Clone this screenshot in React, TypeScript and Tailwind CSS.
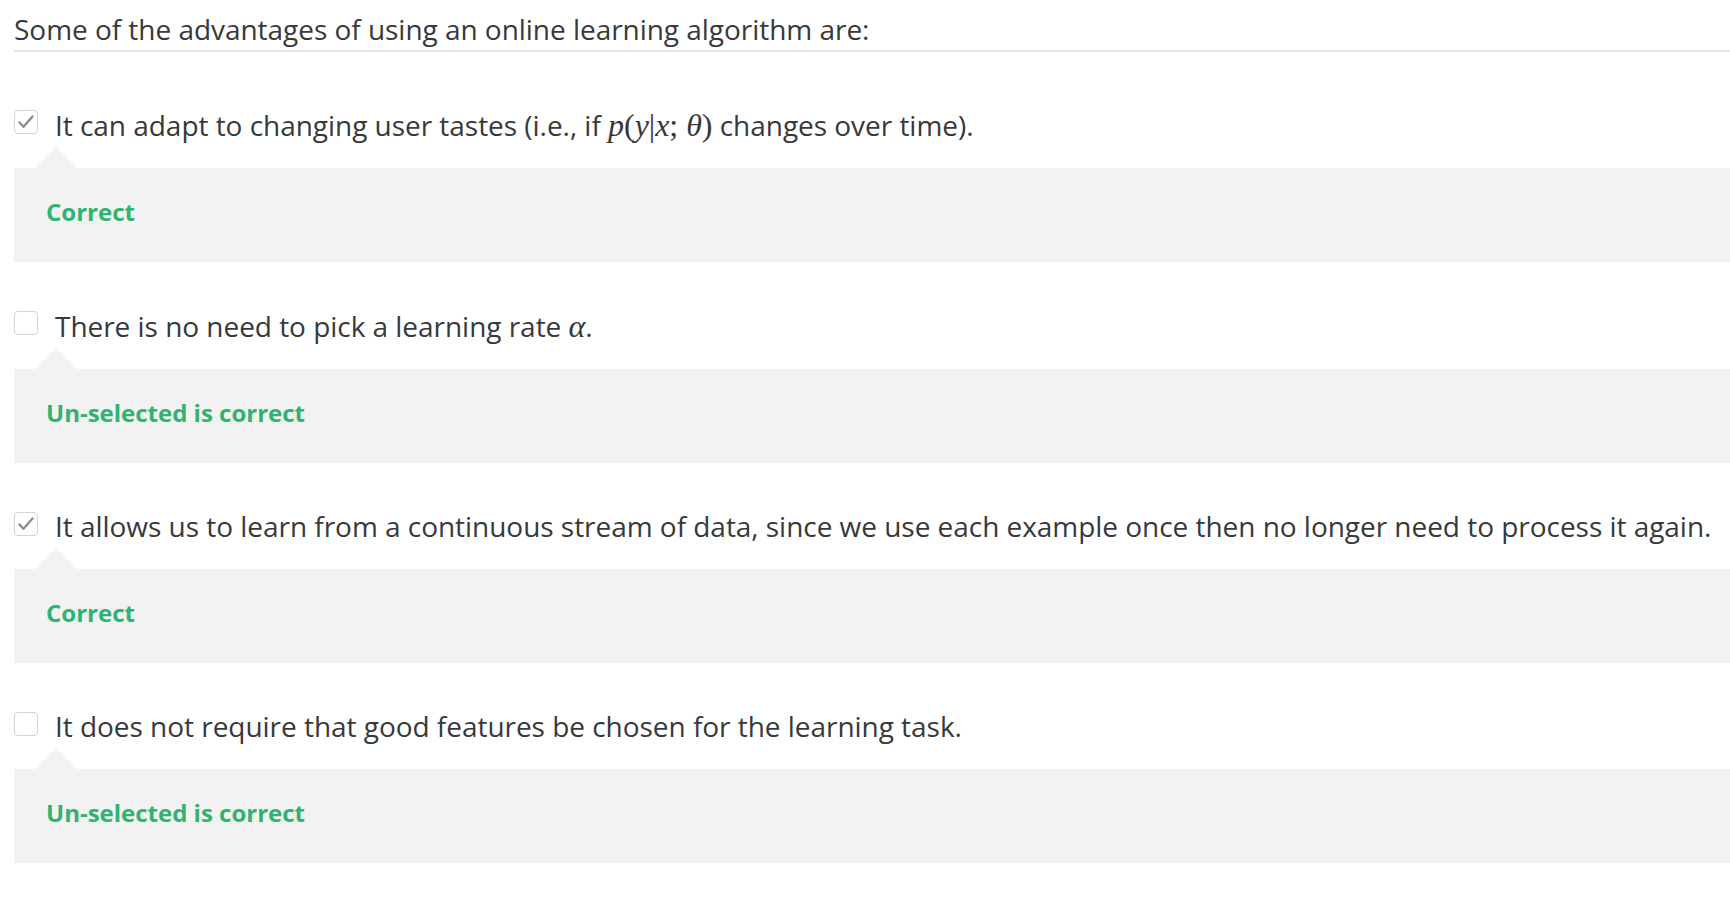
import React from 'react';

type Option = {
  id: number;
  checked: boolean;
  text: React.ReactNode;
  feedback: string;
};

const serif = { fontFamily: '"Liberation Serif", "DejaVu Serif", serif' };

const MathI = ({ children }: { children: React.ReactNode }) => (
  <span className="italic" style={serif}>{children}</span>
);

const MathR = ({ children }: { children: React.ReactNode }) => (
  <span style={serif}>{children}</span>
);

const options: Option[] = [
  {
    id: 1,
    checked: true,
    text: (
      <>
        It can adapt to changing user tastes (i.e., if{' '}
        <span className="text-[32px]">
          <MathI>p</MathI>
          <MathR>(</MathR>
          <MathI>y</MathI>
          <MathR>|</MathR>
          <MathI>x</MathI>
          <MathR>; </MathR>
          <MathI>θ</MathI>
          <MathR>)</MathR>
        </span>{' '}
        changes over time).
      </>
    ),
    feedback: 'Correct',
  },
  {
    id: 2,
    checked: false,
    text: (
      <>
        There is no need to pick a learning rate{' '}
        <span className="text-[32px]">
          <MathI>α</MathI>
        </span>
        .
      </>
    ),
    feedback: 'Un-selected is correct',
  },
  {
    id: 3,
    checked: true,
    text: 'It allows us to learn from a continuous stream of data, since we use each example once then no longer need to process it again.',
    feedback: 'Correct',
  },
  {
    id: 4,
    checked: false,
    text: 'It does not require that good features be chosen for the learning task.',
    feedback: 'Un-selected is correct',
  },
];

const CheckBox = ({ checked }: { checked: boolean }) => (
  <div className="mt-[6px] w-[24px] h-[24px] shrink-0 rounded-[4px] border border-[#d4d4d4] bg-white flex items-center justify-center">
    {checked && (
      <svg width="16" height="14" viewBox="0 0 16 14" fill="none">
        <path d="M1.5 7.5 L5.5 11.8 L14.5 1.5" stroke="#8c8c8c" strokeWidth="2.4" strokeLinecap="round" strokeLinejoin="round" />
      </svg>
    )}
  </div>
);

const OptionRow = ({ option }: { option: Option }) => (
  <div>
    <div className="flex items-start gap-[17px]">
      <CheckBox checked={option.checked} />
      <div className="text-[28px] leading-[40px] tracking-[-0.035px] text-[#37393b] whitespace-nowrap">{option.text}</div>
    </div>
    <div className="pt-[2px] pl-[21px]">
      <div className="w-0 h-0 border-l-[21px] border-r-[21px] border-b-[21px] border-l-transparent border-r-transparent border-b-[#f2f2f2]" />
    </div>
    <div className="bg-[#f2f2f2] pt-[29px] pb-[35px] px-[32px]">
      <div className="text-[24px] leading-[30px] font-bold text-[#2fb370]">{option.feedback}</div>
    </div>
  </div>
);

export default function App() {
  return (
    <div className="min-h-screen bg-white pl-[14px]" style={{ fontFamily: '"Open Sans", "Noto Sans", sans-serif' }}>
      <h2 className="pt-[9px] pb-[1px] text-[28px] leading-[40px] tracking-[-0.035px] text-[#37393b] font-normal border-b-2 border-[#e4e4e4]">
        Some of the advantages of using an online learning algorithm are:
      </h2>
      <div className="mt-[52px] flex flex-col gap-[43px]">
        {options.map(o => (
          <OptionRow key={o.id} option={o} />
        ))}
      </div>
    </div>
  );
}
